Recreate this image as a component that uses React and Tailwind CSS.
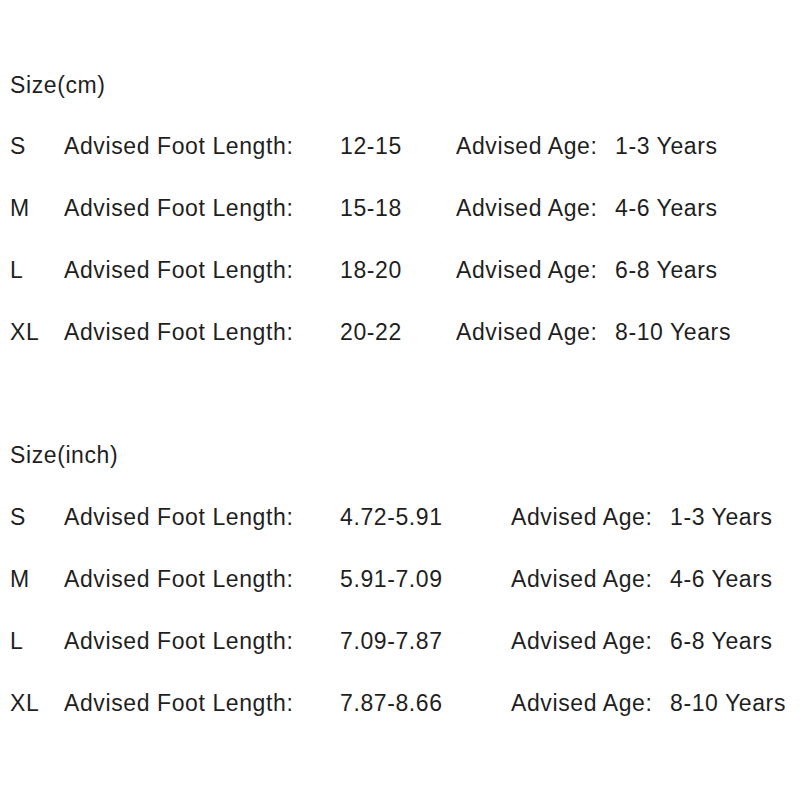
import React from "react";

const cmRows = [
    { size: "S", foot: "12-15", age: "1-3 Years" },
    { size: "M", foot: "15-18", age: "4-6 Years" },
    { size: "L", foot: "18-20", age: "6-8 Years" },
    { size: "XL", foot: "20-22", age: "8-10 Years" },
];

const inchRows = [
    { size: "S", foot: "4.72-5.91", age: "1-3 Years" },
    { size: "M", foot: "5.91-7.09", age: "4-6 Years" },
    { size: "L", foot: "7.09-7.87", age: "6-8 Years" },
    { size: "XL", foot: "7.87-8.66", age: "8-10 Years" },
];

function SizeRow({ row, wide }) {
    return (
        <div className="flex h-[61.8px] items-center whitespace-nowrap">
            <span className="w-[54px]">{row.size}</span>
            <span className="w-[276px]">Advised Foot Length:</span>
            <span className={wide ? "w-[171px]" : "w-[116px]"}>{row.foot}</span>
            <span className="w-[159px]">Advised Age:</span>
            <span>{row.age}</span>
        </div>
    );
}

export default function App() {
    return (
        <div
            className="w-[800px] h-[800px] bg-white pl-[10px] pt-[54px] text-[23px] tracking-[0.6px] text-[#1f1f1f]"
            style={{ fontFamily: '"Liberation Sans", Arial, sans-serif' }}
        >
            {/*cm table*/}
            <div className="flex h-[61.8px] items-center">Size(cm)</div>
            {cmRows.map((row) => (
                <SizeRow key={"cm" + row.size} row={row} />
            ))}

            <div className="h-[61.8px]" />

            {/*inch table*/}
            <div className="flex h-[61.8px] items-center">Size(inch)</div>
            {inchRows.map((row) => (
                <SizeRow key={"in" + row.size} row={row} wide />
            ))}
        </div>
    );
}
